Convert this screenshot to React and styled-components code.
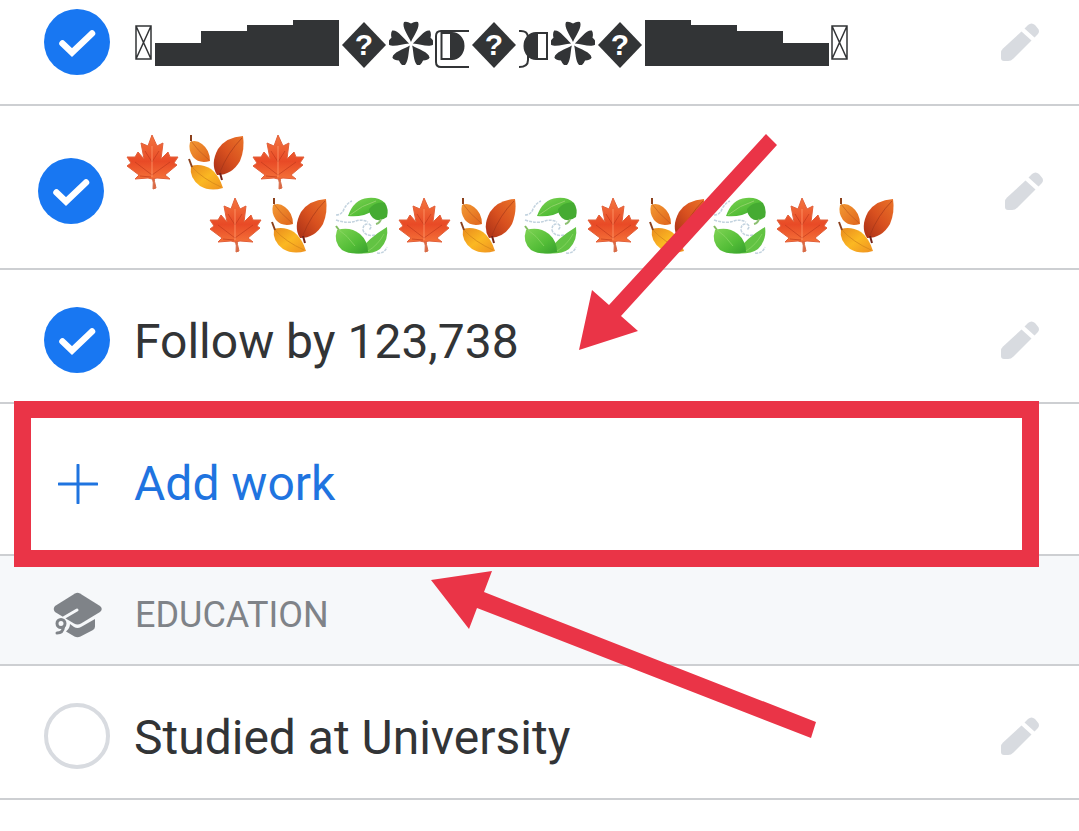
import styled, { createGlobalStyle } from 'styled-components';

const palette = {
  ink: '#323436',
  blue: '#1877f2',
  link: '#1f74e0',
  gray: '#7f8388',
  light: '#d8dbe0',
  line: '#cdcfd2',
  band: '#f6f8fa',
  red: '#ea3447',
};

function CheckIcon() {
  return (
    <svg viewBox="0 0 66 66" width="66" height="66" aria-hidden="true">
      <path d="M18.5 34.5 L28 43.5 L48 24.5" fill="none" stroke="#fff" strokeWidth="6.5" strokeLinecap="round" />
    </svg>
  );
}

function PencilIcon() {
  return (
    <svg viewBox="0 0 40 40" width="40" height="40" aria-hidden="true">
      <path d="M21.5 9.5 L31.5 18.5 L13.5 36.5 Q11 39 8 39 H4 Q1 39 1 36 V30.5 Q1 28.5 3 26.5 Z" fill={palette.light} />
      <path d="M24.5 6.5 L28 3 Q31.5 0 35 3 L37.5 6 Q40.5 9 37.5 12.5 L34.5 15.5 Z" fill={palette.light} />
    </svg>
  );
}

function CapIcon() {
  return (
    <svg viewBox="0 0 50 46" width="50" height="46" aria-hidden="true">
      <path
        d="M22 1.5 Q24.5 0 27 1.5 L47 14 Q50.500 17 47 20 L28 31.500 Q24.500 33.500 21 31.500 L2 20 Q-0.500 17 2 14 Z"
        fill={palette.gray}
      />
      <path d="M17 32 L21 35 Q24.5 37 28 35 L42 27 V34.500 Q42 36.500 40 38 L27.500 44.500 Q24.500 46 21.500 44.500 L13 39.500 Q17 36 17 32 Z" fill={palette.gray} />
      <path d="M24 18 L12 25 L4 31" fill="none" stroke={palette.band} strokeWidth="3" strokeLinecap="round" strokeLinejoin="round" />
      <circle cx="8" cy="31.5" r="4" fill={palette.band} stroke={palette.gray} strokeWidth="3" />
      <path d="M10.5 35 Q10 41 4 41" fill="none" stroke={palette.gray} strokeWidth="3" strokeLinecap="round" />
    </svg>
  );
}

function PlusIcon() {
  return (
    <svg viewBox="0 0 40 40" width="40" height="40" aria-hidden="true">
      <path d="M20 1 V39 M1 20 H39" stroke={palette.link} strokeWidth="3" strokeLinecap="round" />
    </svg>
  );
}

function FlowerIcon() {
  return (
    <svg viewBox="0 0 44 44" width="44" height="44" aria-hidden="true">
      {[0, 72, 144, 216, 288].map((angle) => (
        <path
          key={angle}
          d="M22 21 C19 14 12.5 6 15 1 Q18 0 22 2.5 Q26 0 29 1 C31.5 6 25 14 22 21 Z"
          transform={`rotate(${angle} 22 23)`}
          fill={palette.ink}
        />
      ))}
    </svg>
  );
}

function HalfMoonLeft() {
  return (
    <svg viewBox="0 -14 34 56" width="34" height="56" aria-hidden="true">
      <path d="M34 2 H6 Q1 2 1 7 V33 Q1 38 6 38 H34" fill="none" stroke={palette.ink} strokeWidth="2" />
      <path d="M6.5 4 H16 V30 H6.5 Z" fill="none" stroke={palette.ink} strokeWidth="2" />
      <path d="M15 3 H17 A12.5 14 0 0 1 17 31 H15 Z" fill={palette.ink} />
    </svg>
  );
}

function HalfMoonRight() {
  return (
    <svg viewBox="0 -14 30 56" width="30" height="56" aria-hidden="true">
      <path d="M0 2 Q9 1 9 9 V31 Q9 38 0 38" fill="none" stroke={palette.ink} strokeWidth="2" />
      <path d="M18 4 H28 V30 H18 Z" fill="none" stroke={palette.ink} strokeWidth="2" />
      <path d="M19 3 H17 A12.5 14 0 0 0 17 31 H19 Z" fill={palette.ink} />
    </svg>
  );
}

function MissingGlyph() {
  return (
    <svg viewBox="0 0 18 36" width="18" height="36" aria-hidden="true">
      <path d="M1 1 H16 V34 H1 Z M1 1 L16 34 M16 1 L1 34" fill="none" stroke={palette.ink} strokeWidth="1.5" />
    </svg>
  );
}

function Replacement() {
  return (
    <Diamond>
      <svg viewBox="0 0 46 46" width="46" height="46" aria-hidden="true">
        <polygon points="23,0 45,23 23,46 1,23" fill={palette.ink} />
      </svg>
      <span>?</span>
    </Diamond>
  );
}

function Gradients() {
  return (
    <HiddenSvg aria-hidden="true">
      <defs>
        <linearGradient id="maple" x1="0" y1="0" x2="0" y2="1">
          <stop offset="0" stopColor="#f4763f" />
          <stop offset="0.6" stopColor="#e84a26" />
          <stop offset="1" stopColor="#f47038" />
        </linearGradient>
        <linearGradient id="rust" x1="1" y1="0" x2="0" y2="1">
          <stop offset="0" stopColor="#ea7328" />
          <stop offset="0.5" stopColor="#d8501f" />
          <stop offset="1" stopColor="#a72f17" />
        </linearGradient>
        <linearGradient id="orange" x1="0" y1="0" x2="1" y2="1">
          <stop offset="0" stopColor="#f39a34" />
          <stop offset="1" stopColor="#e0641b" />
        </linearGradient>
        <linearGradient id="gold" x1="0" y1="0" x2="1" y2="1">
          <stop offset="0" stopColor="#e98a1e" />
          <stop offset="0.5" stopColor="#fbb822" />
          <stop offset="1" stopColor="#ef9120" />
        </linearGradient>
        <linearGradient id="green" x1="0" y1="0" x2="1" y2="1">
          <stop offset="0" stopColor="#7fd454" />
          <stop offset="0.6" stopColor="#53bd37" />
          <stop offset="1" stopColor="#369f2d" />
        </linearGradient>
      </defs>
    </HiddenSvg>
  );
}

function MapleLeaf() {
  return (
    <svg viewBox="0 0 63 63" width="63" height="63" role="img" aria-label="🍁">
      <path d="M31 44 Q33 51 32 57 L35 56 Q33 49 33 44 Z" fill="#d96a45" stroke="#d96a45" />
      <path
        d="M31 3 L36 14 L42 11 L40 27 L47 20 L49 25 L57 25 L53 31 L56 33 L44 43 L49 47 L36 46 L31 47 L27 46 L14 47 L18 43 L6 34 L10 31 L6 25 L14 25 L17 20 L23 27 L20 11 L27 14 Z"
        fill="url(#maple)"
        stroke="#e2603a"
        strokeWidth="1"
        strokeLinejoin="round"
      />
      <path d="M31 43 L14 30 M31 43 L49 30 M31 30 L24 19 M31 30 L38 19 M30 45 L19 44" fill="none" stroke="#c23a1d" strokeWidth="1" opacity="0.7" />
      <path d="M31 45 V14" fill="none" stroke="#ff9a6c" strokeWidth="1" opacity="0.8" />
    </svg>
  );
}

function FallenLeaves() {
  return (
    <svg viewBox="0 0 63 63" width="63" height="63" role="img" aria-label="🍂">
      <path d="M6 10 Q12 7 18 12 Q26 18 26 29 Q15 32 9 25 Q4 18 6 10 Z" fill="url(#orange)" />
      <path d="M7 3 L7 9" fill="none" stroke="#8b401c" strokeWidth="2" />
      <path d="M7 9 Q13 18 25 28" fill="none" stroke="#b9571f" strokeWidth="1" opacity="0.6" />
      <path d="M59 4 Q42 5 34 17 Q26 32 33 43 Q48 43 56 29 Q61 17 59 4 Z" fill="url(#rust)" />
      <path d="M58 6 Q44 20 36 40" fill="none" stroke="#9e3318" strokeWidth="1" opacity="0.6" />
      <path d="M36 41 L38 48" fill="none" stroke="#71231a" strokeWidth="2" />
      <path d="M7 34 Q17 31 27 37 Q35 43 39 56 Q26 60 16 54 Q5 46 7 34 Z" fill="url(#gold)" />
      <path d="M5 27 L8 35" fill="none" stroke="#8b401c" strokeWidth="2" />
      <path d="M8 35 Q19 47 37 55" fill="none" stroke="#d4881a" strokeWidth="1" opacity="0.8" />
    </svg>
  );
}

function WindLeaves() {
  return (
    <svg viewBox="0 0 63 63" width="63" height="63" role="img" aria-label="🍃">
      <path d="M6 20 Q12 20 14 14 Q17 8 22 6 M6 25 Q18 29 26 26 Q32 24 38 27 M45 40 Q35 42 33 35 Q33 28 39 29 Q43 31 39 35 M47 58 Q54 59 57 52" fill="none" stroke="#c3d3df" strokeWidth="1.5" strokeDasharray="3 1" />
      <path d="M18 21 Q24 4 38 3 Q49 2 55 8 Q43 17 34 20 Q26 22 18 21 Z" fill="url(#green)" />
      <path d="M39 14 Q46 6 55 8 Q59 14 57 22 Q49 28 43 23 Q39 19 39 14 Z" fill="#45ab32" />
      <path d="M20 20 Q32 10 46 6" fill="none" stroke="#8fd268" strokeWidth="1" />
      <path d="M51 24 Q50 28 46 29" fill="none" stroke="#8cc070" strokeWidth="2" />
      <path d="M29 57 Q37 44 57 32 Q59 45 50 54 Q42 60 24 58 Z" fill="#62c343" />
      <path d="M7 35 Q20 31 30 39 Q38 46 38 57 Q22 61 12 55 Q3 47 7 35 Z" fill="url(#green)" />
      <path d="M6 31 L9 35" fill="none" stroke="#83bd5f" strokeWidth="2" />
      <path d="M9 35 Q17 40 25 51 M38 56 Q48 50 54 39" fill="none" stroke="#8ed768" strokeWidth="1" opacity="0.7" />
    </svg>
  );
}

const emojis = { m: MapleLeaf, f: FallenLeaves, w: WindLeaves };

function EmojiText({ code }) {
  return [...code].map((key, i) => {
    const Emoji = emojis[key];
    return <Emoji key={i} />;
  });
}

const rising = [23, 35, 41, 46];

function Ornament() {
  return (
    <OrnamentLine>
      <MissingGlyph />
      <Bars>
        {rising.map((h) => (
          <Bar key={h} $height={h} />
        ))}
      </Bars>
      <Replacement />
      <FlowerIcon />
      <HalfMoonLeft />
      <Replacement />
      <HalfMoonRight />
      <FlowerIcon />
      <Replacement />
      <Bars>
        {[...rising].reverse().map((h) => (
          <Bar key={h} $height={h} />
        ))}
      </Bars>
      <MissingGlyph />
    </OrnamentLine>
  );
}

function Item({ label, checked, children, $first, $wide }) {
  return (
    <Row $first={$first} $wide={$wide}>
      <Choice>
        <Checkbox type="checkbox" defaultChecked={checked} aria-label={label} />
        <Mark>
          <CheckIcon />
        </Mark>
        {children}
      </Choice>
      <EditButton type="button" aria-label={`Edit ${label}`}>
        <PencilIcon />
      </EditButton>
    </Row>
  );
}

function App() {
  return (
    <Page>
      <GlobalStyle />
      <Gradients />
      <Item label="Ornament" checked $first>
        <Ornament />
      </Item>
      <Item label="Leaves" checked $wide>
        <Leaves>
          <EmojiLine>
            <EmojiText code="mfm" />
          </EmojiLine>
          <EmojiLine $indent>
            <EmojiText code="mfwmfwmfwmf" />
          </EmojiLine>
        </Leaves>
      </Item>
      <Item label="Follow by 123,738" checked>
        <Label>Follow by 123,738</Label>
      </Item>
      <AddRow>
        <AddButton type="button">
          <PlusIcon />
          <span>Add work</span>
        </AddButton>
        <Highlight />
      </AddRow>
      <SectionHeader>
        <CapIcon />
        <SectionTitle>EDUCATION</SectionTitle>
      </SectionHeader>
      <Item label="Studied at University">
        <Label>Studied at University</Label>
      </Item>
      <Arrows viewBox="0 0 840 760" width="840" height="760" aria-hidden="true">
        <polygon points="766,134 777,145 621,316 638,331 579,350 592,290 609,305" />
        <polygon points="431,580 492,571 484,592 816,722 811,738 477,608 469,629" />
      </Arrows>
    </Page>
  );
}

export default App;

const GlobalStyle = createGlobalStyle`
  * {
    box-sizing: border-box;
  }
  body {
    margin: 0;
    background: #fff;
    color: ${palette.ink};
    font-family: Roboto, "Liberation Sans", sans-serif;
  }
  svg {
    display: block;
    flex-shrink: 0;
  }
`;

const Page = styled.main`
  position: relative;
  overflow: hidden;
`;

const HiddenSvg = styled.svg`
  position: absolute;
  width: 0;
  height: 0;
`;

const Row = styled.div`
  display: flex;
  align-items: center;
  justify-content: space-between;
  padding: ${({ $first, $wide }) => {
    if ($first) return '9px 39px 29px 44px';
    if ($wide) return '18px 35px 10px 38px';
    return '37px 39px 29px 44px';
  }};
  border-bottom: 2px solid ${palette.line};
`;

const Choice = styled.label`
  display: flex;
  align-items: center;
  gap: 24px;
  cursor: pointer;
`;

const Mark = styled.span`
  width: 66px;
  height: 66px;
  flex-shrink: 0;
  border-radius: 50%;
  border: 4px solid ${palette.light};

  svg {
    display: none;
  }
`;

const Checkbox = styled.input`
  position: absolute;
  opacity: 0;

  &:checked + ${Mark} {
    border: 0;
    background: ${palette.blue};
  }
  &:checked + ${Mark} svg {
    display: block;
  }
`;

const Label = styled.span`
  padding-top: 4px;
  font-size: 48px;
  line-height: 56px;
`;

const EditButton = styled.button`
  all: unset;
  cursor: pointer;
`;

const OrnamentLine = styled.span`
  display: flex;
  align-items: center;
  gap: 2px;
  padding: 2px 0 0 1px;
`;

const Bars = styled.span`
  display: flex;
  align-items: flex-end;
  height: 46px;
`;

const Bar = styled.span`
  width: 46px;
  height: ${({ $height }) => $height}px;
  background: ${palette.ink};
`;

const Diamond = styled.span`
  display: grid;
  place-items: center;
  padding-top: 4px;
  color: #fff;
  font-family: 'Liberation Sans', sans-serif;
  font-size: 30px;
  font-weight: 700;
  line-height: 46px;

  > * {
    grid-area: 1 / 1;
  }
`;

const Leaves = styled.span`
  display: flex;
  flex-direction: column;
  padding-top: 8px;
`;

const EmojiLine = styled.span`
  display: flex;
  margin-left: ${({ $indent }) => ($indent ? '76px' : '-7px')};
`;

const AddRow = styled.div`
  position: relative;
  border-bottom: 2px solid ${palette.line};
`;

const AddButton = styled.button`
  all: unset;
  cursor: pointer;
  display: flex;
  align-items: center;
  gap: 36px;
  padding: 52px 58px 42px;
  color: ${palette.link};
  font-size: 48px;
  line-height: 56px;
`;

const Highlight = styled.div`
  position: absolute;
  top: -3px;
  right: 40px;
  bottom: -13px;
  left: 14px;
  border: 17px solid ${palette.red};
  pointer-events: none;
`;

const SectionHeader = styled.header`
  display: flex;
  align-items: center;
  gap: 32px;
  padding: 36px 53px 26px;
  background: ${palette.band};
  border-bottom: 2px solid ${palette.line};
`;

const SectionTitle = styled.h2`
  margin: 0;
  color: ${palette.gray};
  font-size: 36px;
  font-weight: 400;
  line-height: 44px;
`;

const Arrows = styled.svg`
  position: absolute;
  top: 0;
  left: 0;
  fill: ${palette.red};
  pointer-events: none;
`;
